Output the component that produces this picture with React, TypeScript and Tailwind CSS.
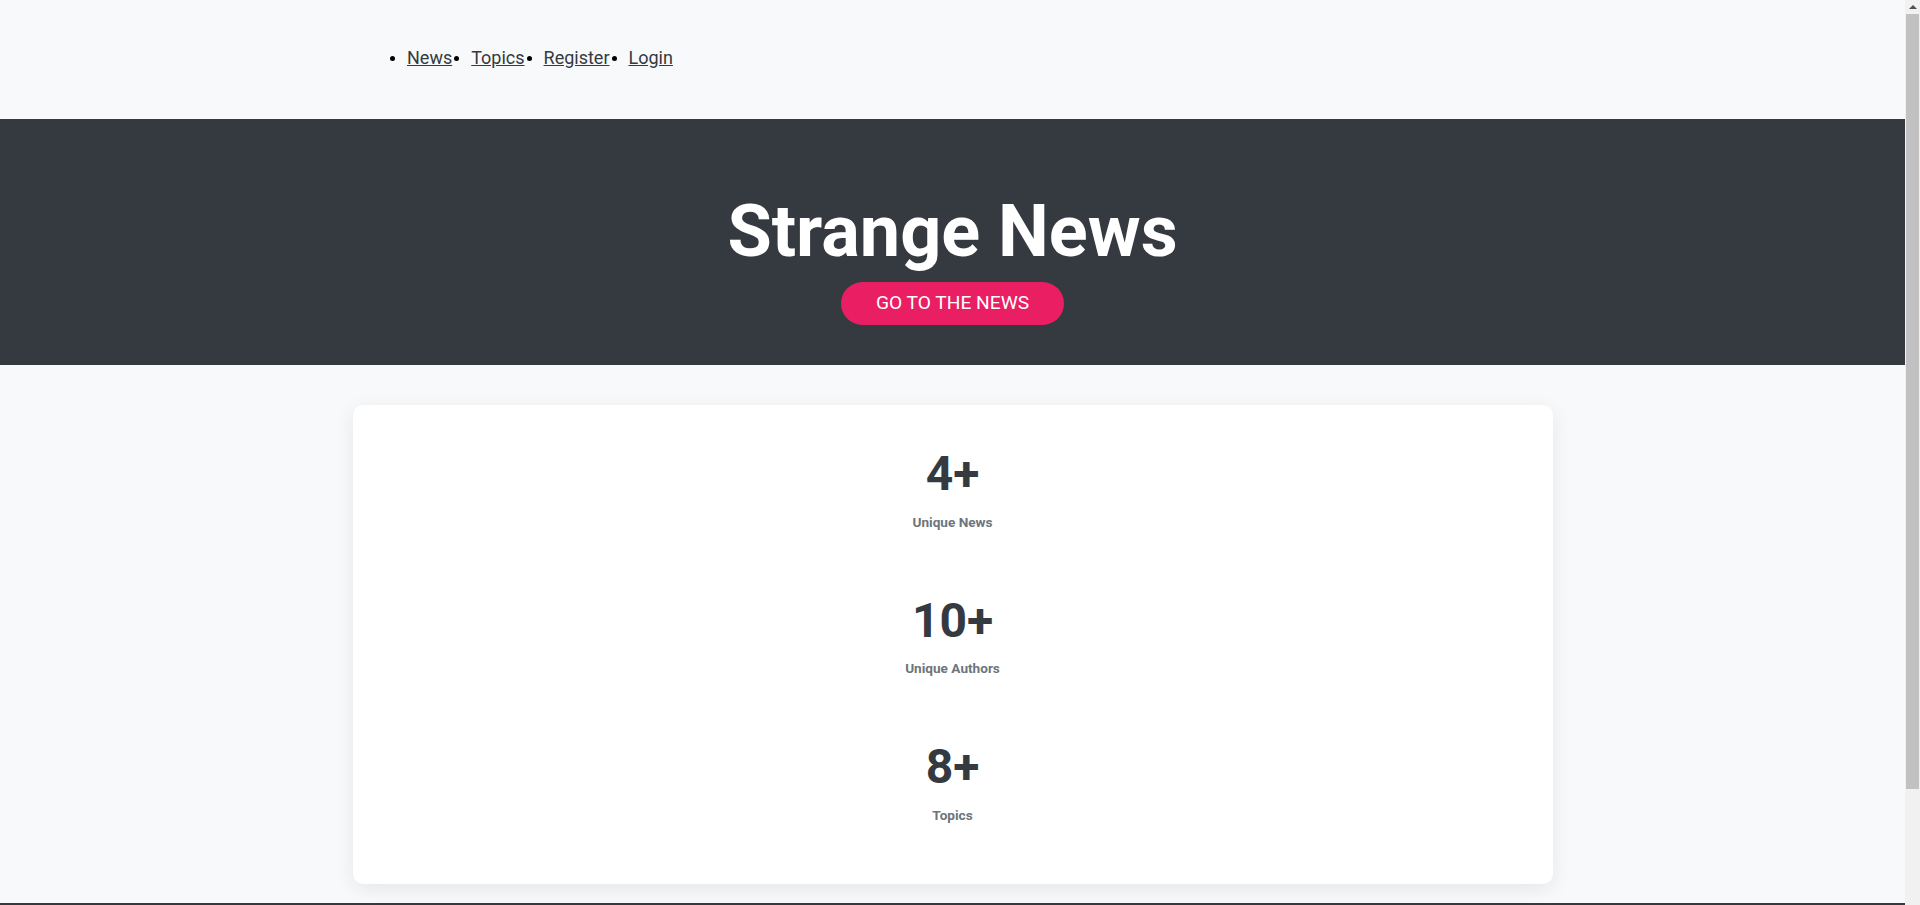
const links = ["News", "Topics", "Register", "Login"];

const stats = [
  { value: "4+", label: "Unique News" },
  { value: "10+", label: "Unique Authors" },
  { value: "8+", label: "Topics" },
];

export default function App() {
  return (
    <div className="min-h-screen bg-[#f8f9fa] pr-[15px] font-['Roboto',_sans-serif] text-[#343a40]">
      {/* nav */}
      <nav className="h-[119px] pt-[44px]">
        <ul className="flex items-center pl-[390px] text-[18px] leading-[28.8px]">
          {links.map((l) => (
            <li key={l} className="flex items-center mr-[2px]">
              <span className="w-[5px] h-[5px] rounded-full bg-black mr-[12px]" />
              <a href="#" className="underline text-[#343a40]">
                {l}
              </a>
            </li>
          ))}
        </ul>
      </nav>

      {/* hero */}
      <header className="h-[246px] bg-[#343a40] flex flex-col items-center pt-[70px]">
        <h1 className="text-[72px] leading-[86px] font-bold text-white">Strange News</h1>
        <button className="mt-[7px] h-[43px] w-[223px] rounded-full bg-[#e91e63] text-white text-[19.2px]">
          GO TO THE NEWS
        </button>
      </header>

      {/* stats */}
      <main className="pt-[40px] pb-[19px]">
        <div className="mx-auto w-[1200px] bg-white rounded-[10px] shadow-[0_5px_20px_rgba(0,0,0,0.08)] pt-[40px] pb-[59px] flex flex-col items-center gap-[60px]">
          {stats.map((s) => (
            <div key={s.label} className="flex flex-col items-center">
              <div className="text-[48px] leading-[57.6px] font-bold text-[#343a40]">{s.value}</div>
              <div className="mt-[9px] text-[13.6px] leading-[20px] font-bold text-[#6c757d]">{s.label}</div>
            </div>
          ))}
        </div>
      </main>

      <footer className="h-[120px] bg-[#343a40]" />

      {/* scrollbar */}
      <div className="fixed top-0 right-0 h-screen w-[15px] bg-[#f1f1f1] flex flex-col items-center">
        <div className="h-[14px] flex items-center justify-center">
          <div className="w-0 h-0 border-l-[4px] border-r-[4px] border-b-[4px] border-l-transparent border-r-transparent border-b-[#505050]" />
        </div>
        <div className="w-[13px] h-[775px] bg-[#c1c1c1]" />
      </div>
    </div>
  );
}
